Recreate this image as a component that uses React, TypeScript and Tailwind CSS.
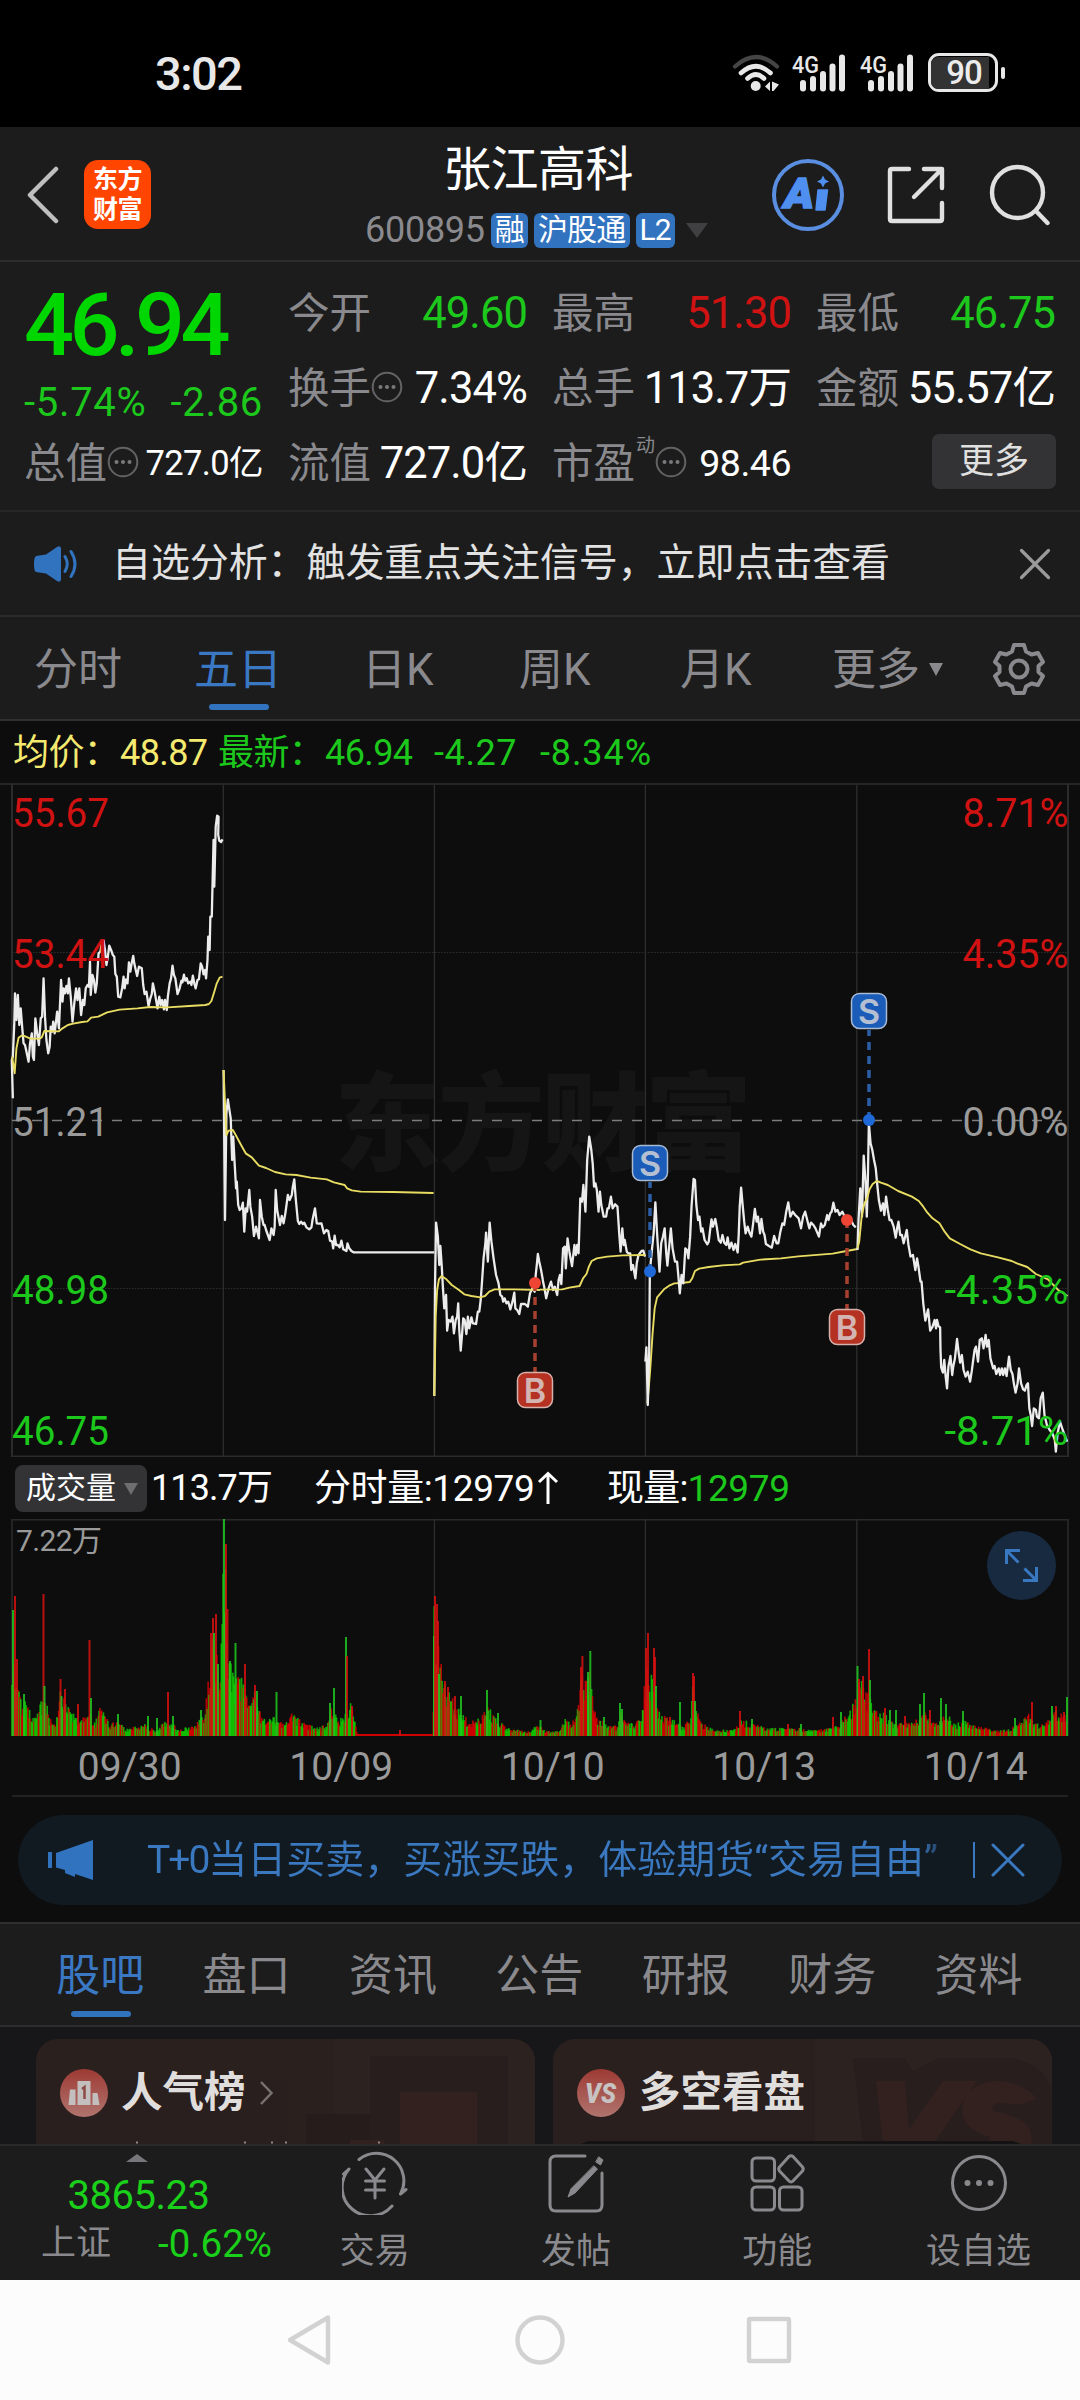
import React from "react";

const FONT = "font-[Roboto,'Noto_Sans_CJK_SC',sans-serif]";

/* ---------- status bar ---------- */

function Wifi() {
  return (
    <svg width="50" height="40" viewBox="0 0 50 40" fill="none" strokeLinecap="round">
      <path d="M4 13.5Q25 -5.5 46 13.5" stroke="#454545" strokeWidth="4.2" />
      <path d="M10 20Q25 6.5 39.5 20" stroke="#e8e8e8" strokeWidth="4.6" />
      <path d="M16.500 25.500Q25 17.500 33 25.500" stroke="#e8e8e8" strokeWidth="4.6" />
      <circle cx="24.700" cy="33" r="5" fill="#e8e8e8" />
      <path d="M34 33.500L39 28.500V38ZM41 38V28.500L48 31.500L42.500 38Z" fill="#e8e8e8" />
    </svg>
  );
}

function Signal() {
  return (
    <svg width="55" height="40" viewBox="0 0 55 40" fill="#e8e8e8">
      <text x="0" y="19.500" fontSize="24" fontWeight="500" textLength="27" lengthAdjust="spacingAndGlyphs" fontFamily="Roboto">
        4G
      </text>
      <rect x="8" y="27" width="6" height="11.500" rx="3" />
      <rect x="18" y="23" width="6" height="15.500" rx="3" />
      <rect x="28" y="18" width="6" height="20.500" rx="3" />
      <rect x="37.500" y="10.500" width="6" height="28" rx="3" />
      <rect x="47" y="1.500" width="6" height="37" rx="3" />
    </svg>
  );
}

function StatusBar() {
  return (
    <div className="flex h-[127px] items-center justify-between bg-black pl-[155px] pr-[75px]">
      <div className="pt-[19px] text-[47px] font-medium leading-none tracking-[-1.5px] text-[#e8e8e8]">3:02</div>
      <div className="flex items-center pt-[18px]">
        <Wifi />
        <div className="ml-[11px]">
          <Signal />
        </div>
        <div className="ml-[13px]">
          <Signal />
        </div>
        <div className="ml-[13px] flex h-[39px] w-[70px] items-center rounded-[11px] border-[3px] border-[#e8e8e8]">
          <div className="flex h-[32px] w-[58px] items-center justify-center rounded-l-[7px] bg-[#333] pl-[8px] text-[33px] font-medium leading-none tracking-[-1px] text-[#ececec]">
            90
          </div>
        </div>
        <div className="ml-[3px] h-[12px] w-[4px] rounded-full bg-[#e8e8e8]" />
      </div>
    </div>
  );
}

/* ---------- header ---------- */

function Badge({ children }: { children: React.ReactNode }) {
  return (
    <span className="flex h-[35px] items-center rounded-[6px] bg-[#3273c0] px-[4px] text-[30px] leading-none tracking-[-0.8px] text-white">
      {children}
    </span>
  );
}

function Header() {
  return (
    <div className="flex h-[135px] items-center border-b-2 border-[#2c2c2e] bg-[#1c1c1c] pl-[24px] pt-[2px]">
      <svg width="36" height="58" viewBox="0 0 36 58" fill="none" stroke="#bfbfbf" strokeWidth="4.500" strokeLinecap="round" strokeLinejoin="round">
        <path d="M32 3L6 29L32 55" />
      </svg>
      <div className="ml-[24px] flex h-[69px] w-[67px] flex-col items-center justify-center gap-[4px] rounded-[14px] bg-[#ff4500] text-[25px] font-bold leading-[26px] tracking-[-0.5px] text-white">
        <span>东方</span>
        <span>财富</span>
      </div>
      <div className="ml-[213px] flex w-[345px] flex-col items-center">
        <div className="ml-[3px] mt-[5px] text-[48px] leading-[48px] tracking-[-0.5px] text-white">张江高科</div>
        <div className="mt-[18px] flex items-center gap-[6px]">
          <span className="text-[36px] leading-none tracking-[-0.3px] text-[#8a8a8e]">600895</span>
          <Badge>融</Badge>
          <Badge>沪股通</Badge>
          <Badge>L2</Badge>
          <span className="ml-[5px] h-0 w-0 border-x-[11px] border-t-[15px] border-x-transparent border-t-[#404042]" />
        </div>
      </div>
      <svg className="ml-[62px]" width="74" height="74" viewBox="0 0 74 74" fill="none">
        <circle cx="37" cy="37" r="34" stroke="#5a8ee0" strokeWidth="4" />
        <text x="13" y="50" fontSize="42" fontWeight="900" fontStyle="italic" fill="#4f8ff0" stroke="#4f8ff0" strokeWidth="1.500" fontFamily="Roboto" textLength="30" lengthAdjust="spacingAndGlyphs">
          A
        </text>
        <path d="M47 32H56.500L54 52H45Z" fill="#4f8ff0" stroke="#4f8ff0" strokeWidth="1.500" strokeLinejoin="round" />
        <path d="M52 17.500L54 21.500L58 23.500L54 25.500L52 29.500L50 25.500L46 23.500L50 21.500Z" fill="#4f8ff0" />
      </svg>
      <svg className="ml-[41px]" width="60" height="60" viewBox="0 0 60 60" fill="none" stroke="#e0e0e0" strokeWidth="4.400" strokeLinecap="round" strokeLinejoin="round">
        <path d="M23 4H6Q4 4 4 6V54Q4 56 6 56H54Q56 56 56 54V38" />
        <path d="M38 4H56V23M55 5L28 32" />
      </svg>
      <svg className="ml-[43px]" width="62" height="62" viewBox="0 0 62 62" fill="none" stroke="#e0e0e0" strokeWidth="4.400" strokeLinecap="round">
        <circle cx="28.500" cy="28.500" r="25.500" />
        <path d="M47 47L58.500 59" />
      </svg>
    </div>
  );
}

/* ---------- quote block ---------- */

function InfoDot() {
  return (
    <svg width="32" height="32" viewBox="0 0 32 32" fill="none" className="-mt-[4px] shrink-0">
      <circle cx="16" cy="16" r="14.300" stroke="#636366" strokeWidth="2" />
      <circle cx="9.500" cy="16" r="2" fill="#7a7a7e" />
      <circle cx="16" cy="16" r="2" fill="#7a7a7e" />
      <circle cx="22.500" cy="16" r="2" fill="#7a7a7e" />
    </svg>
  );
}

function Stat({
  label,
  value,
  info,
  sup,
  color = "text-white",
  size = "text-[43.500px] tracking-[-0.9px]",
}: {
  label: string;
  value: string;
  info?: boolean;
  sup?: string;
  color?: string;
  size?: string;
}) {
  return (
    <div className="flex h-[75px] w-[239px] items-center whitespace-nowrap">
      <span className="text-[41.500px] leading-none text-[#8a8a8e]">{label}</span>
      {sup && <span className="-mt-[36px] ml-px text-[19px] leading-none text-[#8a8a8e]">{sup}</span>}
      {info && <InfoDot />}
      <span className={`ml-auto leading-none ${color} ${size}`}>{value}</span>
    </div>
  );
}

function Quote() {
  return (
    <div className="flex h-[250px] items-start border-b-2 border-[#262628] bg-[#1c1c1c] pl-[24px]">
      <div className="w-[239px]">
        <div className="pt-[19px] text-[88px] font-medium leading-[88px] tracking-[-4.500px] text-[#00d600]">46.94</div>
        <div className="mt-[12px] flex h-[43px] items-center justify-between text-[40px] leading-none text-[#1cc81c]">
          <span className="tracking-[0.7px]">-5.74%</span>
          <span className="tracking-[0.7px]">-2.86</span>
        </div>
        <div className="mt-[2px]">
          <Stat label="总值" value="727.0亿" info size="text-[34.500px] tracking-[-0.6px]" />
        </div>
      </div>
      <div className="ml-[25px] pt-[14px]">
        <Stat label="今开" value="49.60" color="text-[#1cc81c]" />
        <Stat label="换手" value="7.34%" info />
        <Stat label="流值" value="727.0亿" />
      </div>
      <div className="ml-[25px] pt-[14px]">
        <Stat label="最高" value="51.30" color="text-[#d01212]" />
        <Stat label="总手" value="113.7万" />
        <Stat label="市盈" value="98.46" sup="动" info size="text-[37.500px] tracking-[-0.5px]" />
      </div>
      <div className="ml-[25px] pt-[14px]">
        <Stat label="最低" value="46.75" color="text-[#1cc81c]" />
        <Stat label="金额" value="55.57亿" />
        <div className="ml-[116px] mt-[8px] flex h-[55px] w-[124px] items-center justify-center rounded-[7px] bg-[#333335] text-[35px] leading-none text-[#e0e0e0]">
          更多
        </div>
      </div>
    </div>
  );
}

/* ---------- notice + period tabs ---------- */

function Notice() {
  return (
    <div className="flex h-[105px] items-center border-b-2 border-[#2c2c2e] bg-[#1c1c1c] pl-[33px]">
      <svg width="46" height="38" viewBox="0 0 46 38" fill="none">
        <path d="M3 11Q1 12 1 19Q1 26 3 27L13 28.500L24 36Q28 38 28 34V4Q28 0 24 2L13 9.500Z" fill="#3273c0" />
        <path d="M32 11.500Q36.500 19 32 26.500M38 6.500Q46 19 38 31.500" stroke="#3273c0" strokeWidth="3" strokeLinecap="round" />
      </svg>
      <span className="ml-[33px] text-[39px] leading-none tracking-[-0.1px] text-[#e2e2e2]">
        自选分析：触发重点关注信号，立即点击查看
      </span>
      <svg className="ml-auto mr-[29px]" width="32" height="32" viewBox="0 0 32 32" fill="none" stroke="#9a9a9a" strokeWidth="3.200" strokeLinecap="round">
        <path d="M2.500 2.500L29.500 29.500M29.500 2.500L2.500 29.500" />
      </svg>
    </div>
  );
}

function PeriodTabs() {
  return (
    <div className="flex h-[104px] items-center border-b-2 border-[#303032] bg-[#1c1c1c] pl-[34px] pt-[3px] text-[44px] leading-[60px] text-[#8a8a8e]">
      <span className="w-[160px]">分时</span>
      <span className="relative w-[168px] text-[#3a78c4]">
        五日
        <span className="absolute left-[15px] top-[64px] h-[6px] w-[60px] rounded-full bg-[#3273c0]" />
      </span>
      <span className="w-[157px]">日K</span>
      <span className="w-[161px]">周K</span>
      <span className="w-[152px]">月K</span>
      <span className="flex w-[160px] items-center">
        更多
        <span className="ml-[9px] h-0 w-0 border-x-[7.500px] border-t-[13px] border-x-transparent border-t-[#8a8a8e]" />
      </span>
      <svg className="-mt-[2px]" width="54" height="54" viewBox="0 0 54 54" fill="none" stroke="#8a8a8e" strokeWidth="4" strokeLinejoin="round">
        <path d="M22 3H32L34 9.500L39.500 12.500L46 11L51 20L46.500 24V30L51 34L46 43L39.500 41.500L34 44.500L32 51H22L20 44.500L14.500 41.500L8 43L3 34L7.500 30V24L3 20L8 11L14.500 12.500L20 9.500Z" />
        <circle cx="27" cy="27" r="8.500" />
      </svg>
    </div>
  );
}

/* ---------- price chart ---------- */

const GRID_X = [223.3, 434.4, 645.4, 856.8];

const PRICE_1 =
  "36,985 33,870 36,860 40,760 42,670 46,750 50,675 54,765 58,715 62,770 66,820 70,825 75,850 80,875 84,820 89,790 92,860 95,870 99,745 104,790 109,825 114,745 118,740 122,625 126,740 130,810 135,850 139,830 142,770 146,785 149,755 153,790 160,725 165,775 171,630 175,695 178,655 182,670 186,648 190,670 193,625 198,680 203,755 208,700 213,655 217,690 222,655 227,735 232,690 236,705 240,655 245,645 249,650 252,575 254,675 259,615 263,630 267,668 271,640 276,550 281,545 285,520 290,512 294,540 298,585 302,560 306,527 311,540 316,555 320,560 323,612 327,620 331,680 337,682 342,655 346,620 349,655 353,628 357,640 361,577 365,605 369,578 373,558 376,580 379,595 384,618 389,590 397,595 401,645 405,672 410,665 416,708 421,685 425,672 428,640 433,665 441,715 446,680 450,705 454,690 459,718 462,690 467,720 470,680 475,640 479,625 483,587 487,615 491,625 497,672 503,655 508,632 511,637 515,614 519,632 523,625 527,640 533,635 536,645 540,617 544,640 548,655 553,630 557,628 562,580 566,590 570,613 574,600 577,625 581,570 583,500 587,540 589,440 593,440 598,210 600,350 604,170 608,137 612,140 611,195 614,212 619,216 623,208";
const AVG_1 =
  "34,860 41,910 46,835 52,803 60,797 66,797 85,806 110,806 117,802 124,783 165,784 175,775 190,765 205,761 230,756 245,754 255,743 275,740 300,727 335,719 385,715 420,711 470,712 530,708 575,705 585,702 592,693 600,665 607,640 615,623 623,620";

const PRICE_2 =
  "626,-150 630,300 634,-20 638,-62 641,-40 646,-5 650,120 653,50 657,130 661,205 663,185 667,255 671,270 676,265 680,248 684,335 688,265 692,275 698,210 701,260 706,290 711,348 717,320 725,355 728,240 733,290 738,315 741,315 745,330 755,360 760,325 766,345 769,320 772,210 776,270 784,315 789,288 794,310 799,280 806,225 811,240 817,225 820,200 824,178 828,235 834,303 838,312 843,305 848,312 852,308 858,322 866,328 872,322 875,300 879,280 882,265 887,310 893,311 900,310 907,340 914,330 919,333 924,362 930,365 933,385 937,347 941,375 946,375 951,382 956,362 961,388 970,393 973,370 978,385 984,393 990,397 1216,397";
const AVG_2 =
  "626,-150 634,45 640,32 652,30 660,45 675,75 688,100 705,112 725,137 745,144 770,156 800,163 830,165 870,173 915,178 935,187 965,195 972,205 985,211 1010,215 1100,216 1214,219";

const PRICE_3A =
  "1216,828 1218,500 1221,308 1226,350 1230,435 1233,378 1237,440 1240,500 1244,565 1249,525 1252,632 1256,600 1262,605 1267,590 1271,640 1276,600 1280,590 1283,550 1286,630 1290,692 1294,640 1297,595 1301,600 1306,642 1310,590 1314,625 1320,592 1324,610 1333,612 1338,575 1342,575 1346,540 1350,480 1354,415 1359,370 1361,338 1366,425 1371,308 1376,365 1382,415 1389,465 1396,490 1401,525 1406,530 1409,545 1413,535 1418,550 1423,545 1429,568 1435,545 1440,518 1443,565 1448,570 1454,582 1459,552 1470,552 1478,560 1484,520 1491,505 1497,515 1500,465 1503,435 1506,402 1510,425 1515,450 1520,480";
const AVG_3A =
  "1216,828 1220,590 1224,510 1229,478 1236,468 1250,478 1265,495 1285,510 1300,523 1320,528 1345,532 1358,528 1370,515 1385,508 1440,508 1512,510";

const PRICE_3B =
  "8,480 12,500 18,535 25,505 32,485 38,510 43,500 50,525 54,480 58,465 62,492 67,385 72,380 75,445 80,355 86,400 93,438 100,375 104,405 108,375 112,400 117,235 122,245 126,195 132,275 137,120 143,50 149,90 153,130 157,200 161,190 165,210 170,275 174,215 178,255 185,290 192,290 196,265 200,265 206,230 211,265 218,253 225,260 230,340 234,395 239,325 243,375 246,360 252,395 256,400 262,400 265,450 270,435 277,475 281,430 286,405 295,393 300,392 305,410";
const AVG_3B =
  "0,509 65,508 85,503 115,498 125,475 135,462 142,440 150,423 165,415 195,410 240,406 305,405";

const PRICE_4 =
  "306,725 309,682 313,855 317,700 319,455 324,400 330,340 335,247 340,340 347,455 352,370 357,350 362,325 367,405 370,437 376,370 380,325 385,385 392,425 398,425 402,470 406,520 411,465 416,490 422,385 427,390 431,415 436,350 440,260 446,177 450,180 454,255 459,300 463,290 468,335 472,325 478,360 486,373 490,365 494,330 498,298 502,320 509,297 514,325 519,360 525,368 530,345 535,368 541,375 545,352 550,385 556,368 562,390 567,372 574,397 577,345 580,260 584,203 588,250 593,305 597,340 603,320 609,340 614,350 619,310 624,267 629,305 633,290 639,340 643,297 648,335 652,345 656,372 665,378 673,383 680,348 687,370 692,370 698,335 704,310 709,315 715,275 721,247 727,290 734,275 741,285 746,290 751,295 758,325 764,290 770,275 776,300 782,325 787,308 794,315 800,325 810,350 816,310 821,322 827,315 834,285 838,300 843,280 847,275 852,248 858,275 864,270 870,285 878,275 885,290 892,300 903,300 910,315 917,322";
const AVG_4 =
  "312,850 320,750 327,640 333,565 340,532 360,508 375,497 390,490 410,489 435,486 442,475 450,453 462,446 490,441 530,436 580,433 590,428 640,419 700,415 750,409 850,401 890,393 922,387";

const PRICE_5 =
  "922,390 925,300 930,205 935,290 940,107 945,180 949,290 952,180 955,10 960,70 965,90 970,120 975,145 979,190 984,240 990,272 996,250 1000,285 1005,230 1010,270 1015,300 1020,300 1027,320 1033,353 1037,325 1041,305 1046,345 1051,345 1056,370 1060,352 1065,330 1070,375 1076,410 1083,405 1090,450 1095,415 1099,440 1105,485 1108,485 1113,550 1119,602 1127,568 1133,632 1140,620 1146,600 1150,625 1153,600 1157,618 1162,622 1163,690 1165,742 1170,758 1174,720 1178,770 1182,805 1186,740 1192,708 1197,765 1200,740 1205,715 1211,657 1216,700 1220,728 1225,705 1230,750 1236,770 1242,755 1249,785 1254,752 1258,720 1262,690 1266,680 1272,725 1277,660 1283,655 1288,685 1294,645 1298,680 1303,660 1308,715 1316,745 1320,738 1325,762 1332,745 1336,765 1341,745 1345,765 1350,745 1355,768 1362,710 1367,750 1372,762 1376,790 1381,818 1387,790 1391,745 1397,790 1403,808 1408,812 1413,795 1417,790 1421,865 1425,885 1429,918 1434,865 1440,870 1443,890 1449,895 1454,835 1460,818 1465,885 1472,915 1480,930 1488,940 1495,960 1498,995 1503,940 1510,905 1518,930 1525,950 1531,965";
const AVG_5 =
  "922,385 927,365 934,290 942,250 950,235 957,208 966,192 978,183 990,188 1010,195 1040,213 1080,230 1100,243 1113,260 1125,278 1140,295 1160,310 1175,335 1190,355 1220,372 1250,388 1280,400 1330,412 1370,423 1385,430 1415,441 1440,462 1475,478 1505,510 1532,528";

function Trace({ points, avg }: { points: string; avg?: boolean }) {
  return (
    <polyline
      points={points}
      fill="none"
      stroke={avg ? "#e8dc62" : "#ececec"}
      strokeWidth={avg ? 1.9 : 2.3}
      strokeLinejoin="round"
      vectorEffect="non-scaling-stroke"
    />
  );
}

function Marker({ x, dot, box, kind }: { x: number; dot: number; box: number; kind: "S" | "B" }) {
  const sell = kind === "S";
  const fill = sell ? "#1a5cb8" : "#b53222";
  const from = sell ? box + 37 : box;
  return (
    <g>
      <line x1={x} x2={x} y1={from} y2={dot} stroke={sell ? "#2c5fa8" : "#a8402f"} strokeWidth="3.500" strokeDasharray="8 6" strokeDashoffset={sell ? 2 : 3} />
      <circle cx={x} cy={dot} r="6" fill={sell ? "#1f68d8" : "#ee4434"} />
      <rect x={x - 17.5} y={box + 0.5} width="35" height="35" rx="8" fill={fill} stroke={sell ? "#a9bad3" : "#d6b0aa"} strokeWidth="1.500" />
      <text x={x} y={box + 30.5} textAnchor="middle" fontSize="34" fontWeight="600" fontFamily="Inter, Roboto" fill={sell ? "#b4c0d2" : "#d3b6b3"}>
        {kind}
      </text>
    </g>
  );
}

const LEFT_LABELS = [
  { y: 827, t: "55.67", c: "#d01212" },
  { y: 968, t: "53.44", c: "#d01212" },
  { y: 1136, t: "51.21", c: "#9a9a9a" },
  { y: 1304, t: "48.98", c: "#1cc81c" },
  { y: 1445, t: "46.75", c: "#1cc81c" },
];
const RIGHT_LABELS = [
  { y: 827, t: "8.71%", c: "#d01212", w: 106 },
  { y: 968, t: "4.35%", c: "#d01212", w: 106 },
  { y: 1136, t: "0.00%", c: "#9a9a9a", w: 106 },
  { y: 1304, t: "-4.35%", c: "#1cc81c", w: 124 },
  { y: 1445, t: "-8.71%", c: "#1cc81c", w: 124 },
];

function PriceChart() {
  return (
    <svg className="block" width="1080" height="674" viewBox="0 783 1080 674" fontFamily="Roboto">
      <text x="334" y="1162" fontSize="107" fontWeight="900" fill="#151515" fontFamily="'Noto Sans CJK SC', sans-serif" textLength="418">
        东方财富
      </text>
      <path d="M0 784H1080" stroke="#2e2e2e" strokeWidth="1.500" />
      <path d="M12 784V1456.500H1068V784" fill="none" stroke="#2b2b2b" strokeWidth="2" />
      {GRID_X.map((x) => (
        <line key={x} x1={x} x2={x} y1="785" y2="1456" stroke="#2e2e2e" strokeWidth="1.300" />
      ))}
      <path d="M12 952.500H1068M12 1288.500H1068" stroke="#2e2e2e" strokeWidth="1" strokeDasharray="1.500 1.500" />
      <path d="M12 1120.500H1068" stroke="#7c7c7c" strokeWidth="1.600" strokeDasharray="10 10" />
      <g transform="translate(0 770) scale(.35714 .33333)">
        <Trace points={PRICE_1} />
        <Trace points={AVG_1} avg />
      </g>
      <g transform="translate(0 1120) scale(.35714 .33333)">
        <Trace points={PRICE_2} />
        <Trace points={AVG_2} avg />
        <Trace points={PRICE_3A} />
        <Trace points={AVG_3A} avg />
      </g>
      <g transform="translate(540 1120) scale(.34436 .33333)">
        <Trace points={PRICE_3B} />
        <Trace points={AVG_3B} avg />
        <Trace points={AVG_4} avg />
        <Trace points={PRICE_4} />
        <Trace points={PRICE_5} />
        <Trace points={AVG_5} avg />
      </g>
      {LEFT_LABELS.map((l) => (
        <text key={l.t} x="12" y={l.y} fontSize="40.500" fill={l.c} textLength="97" lengthAdjust="spacingAndGlyphs">
          {l.t}
        </text>
      ))}
      {RIGHT_LABELS.map((l) => (
        <text key={l.t} x={1068.5 - l.w} y={l.y} fontSize="40.500" fill={l.c} textLength={l.w} lengthAdjust="spacingAndGlyphs">
          {l.t}
        </text>
      ))}
      <Marker x={869} dot={1120} box={993} kind="S" />
      <Marker x={650} dot={1271.500} box={1145} kind="S" />
      <Marker x={535} dot={1283} box={1372} kind="B" />
      <Marker x={847} dot={1220} box={1309} kind="B" />
    </svg>
  );
}

/* ---------- volume chart ---------- */

const ENVELOPE: [number, number][] = [
  [12, 60], [15, 60], [20, 35], [24, 30], [28, 32], [32, 18], [38, 20], [42, 32], [46, 30], [50, 15], [55, 10],
  [60, 40], [66, 30], [72, 22], [78, 14], [84, 20], [90, 20], [95, 12], [100, 25], [104, 20], [110, 10], [118, 14],
  [125, 6], [135, 8], [145, 10], [155, 5], [165, 12], [172, 12], [178, 6], [190, 8], [200, 14], [205, 20],
  [208, 50], [212, 90], [217, 70], [220, 40], [223, 140], [226, 170], [228, 90], [231, 65], [235, 50], [240, 55],
  [245, 42], [250, 28], [255, 38], [260, 22], [265, 15], [275, 17], [283, 12], [293, 20], [300, 14], [308, 10],
  [318, 7], [326, 10], [332, 25], [338, 14], [345, 18], [350, 30], [355, 18], [357, 2], [382, 2], [433, 2],
  [434, 110], [438, 80], [442, 55], [448, 45], [455, 28], [462, 24], [468, 12], [480, 15], [486, 30], [492, 20],
  [500, 12], [510, 6], [530, 4], [537, 10], [545, 5], [552, 4], [560, 5], [565, 15], [572, 12], [578, 25],
  [581, 60], [586, 55], [590, 60], [593, 30], [598, 16], [610, 9], [618, 9], [621, 28], [627, 12], [635, 10],
  [642, 20], [646, 60], [652, 55], [655, 50], [658, 25], [665, 17], [675, 13], [682, 8], [690, 15], [693, 50],
  [697, 25], [702, 11], [715, 5], [735, 6], [742, 15], [750, 12], [765, 7], [780, 7], [800, 7], [815, 5],
  [830, 7], [838, 10], [848, 20], [855, 35], [860, 50], [866, 42], [870, 35], [875, 22], [885, 19], [892, 12],
  [905, 12], [920, 15], [925, 20], [935, 10], [943, 20], [950, 18], [955, 10], [965, 14], [980, 8], [1000, 5],
  [1010, 6], [1020, 12], [1028, 20], [1033, 12], [1045, 9], [1052, 25], [1058, 20], [1066, 20], [1068, 30],
];

const SPIKES: [number, number, "r" | "g"][] = [
  [13, 126, "g"], [15, 140, "r"], [17, 77, "r"], [24, 42, "g"], [43.5, 142, "r"], [44.5, 50, "g"], [60.5, 57, "r"],
  [61.5, 40, "g"], [65, 47, "r"], [78, 32, "r"], [89.5, 96, "r"], [91, 38, "g"], [118, 22, "g"], [148, 20, "g"],
  [157, 18, "g"], [168, 44, "r"], [173, 20, "g"], [201, 26, "g"], [211, 103, "r"], [213, 118, "r"], [214, 103, "g"],
  [216, 122, "r"], [218, 72, "g"], [226, 192, "r"], [224, 217, "g"], [227.5, 127, "r"], [230, 75, "g"],
  [235.5, 93, "g"], [245, 72, "r"], [255, 51, "r"], [257, 45, "g"], [276.5, 44, "g"], [330, 33, "g"], [334, 48, "g"],
  [346, 99, "g"], [347, 80, "r"], [352, 30, "r"], [400, 6, "r"], [434, 100, "g"], [435, 140, "r"], [437, 132, "r"],
  [438, 115, "r"], [439, 62, "g"], [445, 55, "r"], [448, 49, "r"], [455, 40, "r"], [461, 40, "g"], [487, 46, "g"],
  [498, 23, "g"], [540.5, 16, "g"], [581, 69, "r"], [582.4, 80, "r"], [588, 64, "g"], [590.3, 85, "g"],
  [604, 19, "g"], [620, 33, "g"], [622, 27, "g"], [646, 88, "r"], [648, 103, "r"], [654, 88, "r"], [655, 79, "r"],
  [656, 50, "g"], [670, 19, "r"], [680, 34, "g"], [693, 63, "r"], [694, 60, "r"], [695, 35, "g"], [740, 25, "r"],
  [752, 17, "g"], [788, 12, "r"], [801, 12, "g"], [833, 19, "r"], [841, 24, "g"], [857.5, 70, "g"], [859, 57, "r"],
  [863, 60, "r"], [869, 87, "r"], [870, 56, "g"], [885, 28, "r"], [890, 26, "g"], [896, 26, "g"], [905, 20, "r"],
  [920, 32, "g"], [924, 43, "g"], [930, 26, "r"], [941, 38, "g"], [946, 32, "g"], [963, 25, "g"], [1015, 18, "g"],
  [1032, 34, "r"], [1052, 30, "g"], [1056, 30, "r"], [1064, 24, "r"], [1067, 39, "g"],
];

function hash(n: number) {
  const v = Math.sin(n * 12.9898 + 4.137) * 43758.5453;
  return v - Math.floor(v);
}

function envelopeAt(x: number) {
  for (let i = 1; i < ENVELOPE.length; i++) {
    const [x0, h0] = ENVELOPE[i - 1];
    const [x1, h1] = ENVELOPE[i];
    if (x <= x1) return h0 + ((h1 - h0) * (x - x0)) / (x1 - x0);
  }
  return 20;
}

const BARS = Array.from({ length: 1199 }, (_, i) => {
  const x = 12 + i * 0.8795;
  const quiet = x > 356 && x < 433;
  return {
    x,
    h: Math.max(1.6, envelopeAt(x) * (quiet ? 1 : 0.6 + hash(i) * 0.6)),
    c: quiet || hash(i + 977) < 0.48 ? "#e00000" : "#10d000",
  };
});

function VolumeChart() {
  return (
    <svg className="block" width="1080" height="218" viewBox="0 1519 1080 218" fontFamily="Roboto, 'Noto Sans CJK SC'">
      <path d="M12 1736V1519.700H1068V1736" fill="none" stroke="#2a2a2a" strokeWidth="1.600" />
      {GRID_X.map((x) => (
        <line key={x} x1={x} x2={x} y1="1519" y2="1736" stroke="#2e2e2e" strokeWidth="1.300" />
      ))}
      {BARS.map((b, i) => (
        <rect key={i} x={b.x - 0.8} y={1736 - b.h} width="1.600" height={b.h} fill={b.c} opacity="0.800" />
      ))}
      {SPIKES.map(([x, h, c], i) => (
        <rect key={i} x={x - 1} y={1736 - h} width="2" height={h} fill={c === "r" ? "#d81010" : "#20c820"} opacity="0.850" />
      ))}
      <text x="16" y="1551" fontSize="30" fill="#9a9a9a" textLength="86">
        7.22万
      </text>
      <circle cx="1021.500" cy="1565.500" r="34.500" fill="#182a40" />
      <path d="M1006.500 1564V1550.500H1020M1007 1551L1018.500 1562.500M1036.500 1567V1580.500H1023M1036 1580L1024.500 1568.500" fill="none" stroke="#3878c0" strokeWidth="3" />
    </svg>
  );
}

function ChartPanel() {
  return (
    <div className="bg-[#0d0d0d]">
      <div className="flex h-[62px] items-center whitespace-pre pl-[13px] pt-[2px] text-[36px] leading-none tracking-[-0.6px]">
        <span className="w-[107px] text-[#f5ea70]">均价：</span>
        <span className="w-[98px] text-[#f5ea70]">48.87</span>
        <span className="w-[107px] text-[#1cc81c]">最新：</span>
        <span className="w-[109px] text-[#1cc81c]">46.94</span>
        <span className="w-[106px] tracking-[0.6px] text-[#1cc81c]">-4.27</span>
        <span className="tracking-[0.9px] text-[#1cc81c]">-8.34%</span>
      </div>
      <PriceChart />
      <div className="flex h-[62px] items-center whitespace-nowrap pl-[15px] text-[37px] leading-none tracking-[-0.4px] text-white">
        <div className="flex h-[47px] w-[132px] items-center rounded-[8px] bg-[#333335] pl-[11px]">
          <span className="text-[30px] leading-none tracking-normal">成交量</span>
          <span className="ml-[8px] mt-[2px] h-0 w-0 border-x-[7.500px] border-t-[12px] border-x-transparent border-t-[#6e6e70]" />
        </div>
        <span className="ml-[4px] w-[163px] text-[36px] tracking-[-0.9px]">113.7万</span>
        <span className="w-[223px]">分时量:12979</span>
        <svg className="mr-[48px]" width="22" height="34" viewBox="0 0 22 34" fill="none" stroke="#fff" strokeWidth="3">
          <path d="M11 33V2.500M2 11L11 2.500L20 11" />
        </svg>
        <span className="tracking-[-0.8px]">现量:</span>
        <span className="text-[#1cc81c]">12979</span>
      </div>
      <VolumeChart />
      <div className="mx-[12px] flex h-[60px] items-center border-b-2 border-[#222] pl-[12px] pt-[3px] text-[39px] leading-none text-[#9a9a9a]">
        {["09/30", "10/09", "10/10", "10/13", "10/14"].map((d) => (
          <span key={d} className="w-[211.500px] shrink-0 text-center">
            {d}
          </span>
        ))}
      </div>
      <div className="px-[18px] pb-[17px] pt-[18px]">
        <div className="flex h-[90px] items-center rounded-full bg-[#111921] pl-[29px] text-[#3a78c0]">
          <svg width="48" height="42" viewBox="0 0 48 42" fill="#3273c0">
            <path d="M1 13H5V29H1ZM9 14L46 1V41L28 35V38L18 34V31L9 28.500Z" />
          </svg>
          <div className="ml-[52px] w-[812px] overflow-hidden whitespace-nowrap bg-[linear-gradient(90deg,#3a78c0_95%,#111921_99.500%)] bg-clip-text text-[39px] leading-[52px] text-transparent">
            <span className="tracking-[-2px]">T+0</span>当日买卖，买涨买跌，体验期货“交易自由”
          </div>
          <div className="ml-[14px] h-[36px] w-[2px] bg-[#3a78c0]" />
          <svg className="ml-[15px]" width="36" height="36" viewBox="0 0 36 36" fill="none" stroke="#3a78c0" strokeWidth="3" strokeLinecap="round">
            <path d="M3 3L33 33M33 3L3 33" />
          </svg>
        </div>
      </div>
    </div>
  );
}

/* ---------- community section ---------- */

function SectionTabs() {
  return (
    <div className="flex h-[105px] items-center border-y-2 border-[#2e2e30] bg-[#1c1c1c] pl-[27px] pt-[3px] text-[44px] leading-[60px] text-[#8a8a8e]">
      {["股吧", "盘口", "资讯", "公告", "研报", "财务", "资料"].map((t, i) => (
        <span key={t} className={`relative w-[146.400px] text-center ${i === 0 ? "text-[#3a78c4]" : ""}`}>
          {t}
          {i === 0 && <span className="absolute left-[44px] top-[65px] h-[6px] w-[60px] rounded-full bg-[#3273c0]" />}
        </span>
      ))}
    </div>
  );
}

function Cards() {
  return (
    <div className="flex h-[117px] gap-[18px] overflow-hidden bg-[#17171a] pl-[36px] pt-[12px]">
      <div className="relative h-[140px] w-[499px] overflow-hidden rounded-t-[22px] bg-[#2a211f]">
        <svg className="absolute inset-0" width="499" height="105" viewBox="0 0 499 105">
          <path d="M0 40H252V105H0Z" fill="#281f1e" />
          <path d="M298 0H499V105H298Z" fill="#2c2220" />
          <path d="M334 17H472V105H334Z" fill="#281e1d" />
          <path d="M270 75H334V105H270Z" fill="#251c1b" />
          <path d="M364 53H441V105H364Z" fill="#33211f" />
          <path d="M314 101H348V105H314Z" fill="#33211f" />
          <path d="M100 103.500H102M208 103.500H210M235 103.500H237M249 103.500H251M342 103.500H344" stroke="#8d8887" strokeWidth="2" />
        </svg>
        <div className="relative flex h-[104px] items-center pl-[24px] pt-[3px]">
          <svg width="48" height="48" viewBox="0 0 48 48">
            <defs>
              <linearGradient id="rank" x2="0" y2="1">
                <stop stopColor="#9e3a34" />
                <stop offset="1" stopColor="#b0746e" />
              </linearGradient>
            </defs>
            <circle cx="24" cy="24" r="24" fill="url(#rank)" />
            <path d="M10 20.500H15.500V36H8.500ZM17.500 12H30.500V36H17.500ZM32.500 24H37.500L39.500 36H32.500Z" fill="#c4bfbf" />
            <path d="M22 20L24.500 18V30" fill="none" stroke="#8c4a46" strokeWidth="2.500" />
          </svg>
          <span className="ml-[13px] text-[41.500px] font-bold leading-none text-[#e0dedd]">人气榜</span>
          <svg className="ml-[13px]" width="16" height="26" viewBox="0 0 16 26" fill="none" stroke="#77716f" strokeWidth="2.500">
            <path d="M2 2L12.500 13L2 24" />
          </svg>
        </div>
      </div>
      <div className="relative h-[140px] w-[499px] overflow-hidden rounded-t-[22px] bg-[#2a211f]">
        <svg className="absolute inset-0" width="499" height="105" viewBox="0 0 499 105">
          <path d="M0 40H262V105H0Z" fill="#281f1e" />
          <path d="M262 0H499V105H262Z" fill="#2c2220" />
          <path d="M300 19H352L360 32L385 19H460Q499 28 499 60V105H310Z" fill="#281e1d" />
          <path d="M323 42H352L356 90L390 42H424L380 105H330Z" fill="#33211f" />
          <path d="M484 60Q470 42 440 42Q405 48 410 78Q414 92 438 98L432 105H478Q484 80 440 72Q436 60 464 66Z" fill="#33211f" />
          <path d="M28 105L36 102H460L468 105Z" fill="#141213" />
        </svg>
        <div className="relative flex h-[104px] items-center pl-[24px] pt-[3px]">
          <svg width="48" height="48" viewBox="0 0 48 48">
            <circle cx="24" cy="24" r="24" fill="url(#rank)" />
            <text x="8" y="34" fontSize="28" fontWeight="900" fontStyle="italic" fontFamily="Roboto" fill="#c8c3c3" textLength="31" lengthAdjust="spacingAndGlyphs">
              VS
            </text>
          </svg>
          <span className="ml-[14px] text-[41.500px] font-bold leading-none text-[#e0dedd]">多空看盘</span>
        </div>
      </div>
    </div>
  );
}

/* ---------- bottom bars ---------- */

function Action({ label, children }: { label: string; children: React.ReactNode }) {
  return (
    <div className="flex w-[201.300px] flex-col items-center">
      <svg className="mt-[5px]" width="66" height="64" viewBox="0 0 66 64" fill="none" stroke="#8a8a8e" strokeWidth="3" strokeLinecap="round" strokeLinejoin="round">
        {children}
      </svg>
      <span className="mt-[17px] text-[35px] leading-[40px] text-[#8a8a8e]">{label}</span>
    </div>
  );
}

function BottomBar() {
  return (
    <div className="flex h-[136px] border-t-2 border-[#29292b] bg-[#1c1c1c]">
      <div className="flex w-[274px] flex-col items-center">
        <span className="mt-[8px] h-0 w-0 border-x-[11px] border-b-[8px] border-x-transparent border-b-[#77777b]" />
        <span className="ml-[3px] mt-[11px] text-[40px] leading-[46px] tracking-[-0.500px] text-[#1ad01a]">3865.23</span>
        <div className="mt-[5px] flex w-full items-center justify-between pl-[41px] pr-[2px]">
          <span className="text-[35px] leading-[40px] text-[#8a8a8e]">上证</span>
          <span className="text-[38.500px] leading-[40px] tracking-[0px] text-[#1ad01a]">-0.62%</span>
        </div>
      </div>
      <Action label="交易">
        <path d="M17 8.500A27.500 27.500 0 0 1 58.500 43L64 38.500M50 55A27.500 27.500 0 0 1 7 18L1.500 23" />
        <path d="M24 18L33 29L42 18M33 29V47M23.500 30H42.500M23.500 39H42.500" strokeWidth="3" />
      </Action>
      <Action label="发帖">
        <path d="M42 5H13Q7 5 7 11V54Q7 60 13 60H53Q59 60 59 54V22" />
        <path d="M51 15L54.500 18L32 42L25 46L28 38ZM56 6L60 9L57.500 14L53 11Z" fill="#8a8a8e" strokeWidth="1" />
      </Action>
      <Action label="功能">
        <rect x="8" y="7" width="22.500" height="23" rx="4" />
        <rect x="8" y="36" width="22.500" height="23" rx="4" />
        <rect x="35.500" y="36" width="22.500" height="23" rx="4" />
        <path d="M45 5.500Q47 4 49 5.500L58.500 16Q60 18 58.500 20L49 30Q47 32 45 30L35.500 20Q34 18 35.500 16Z" />
      </Action>
      <Action label="设自选">
        <circle cx="33" cy="32" r="26.500" />
        <g fill="#8a8a8e" stroke="none">
          <circle cx="21.500" cy="32" r="3" />
          <circle cx="33" cy="32" r="3" />
          <circle cx="44.500" cy="32" r="3" />
        </g>
      </Action>
    </div>
  );
}

function NavBar() {
  return (
    <div className="flex h-[120px] items-center bg-[#fcfcfc] pl-[286px]">
      <svg width="508" height="52" viewBox="0 0 508 52" fill="none" stroke="#d2d2d2" strokeWidth="4.400" strokeLinejoin="round">
        <path d="M4 26L42 3.500V48.500Z" />
        <circle cx="254" cy="26" r="22.500" />
        <rect x="463" y="5" width="40" height="42" rx="1" />
      </svg>
    </div>
  );
}

export default function App() {
  return (
    <div className={`w-[1080px] overflow-hidden bg-[#0d0d0d] ${FONT}`}>
      <StatusBar />
      <Header />
      <Quote />
      <Notice />
      <PeriodTabs />
      <ChartPanel />
      <SectionTabs />
      <Cards />
      <BottomBar />
      <NavBar />
    </div>
  );
}
